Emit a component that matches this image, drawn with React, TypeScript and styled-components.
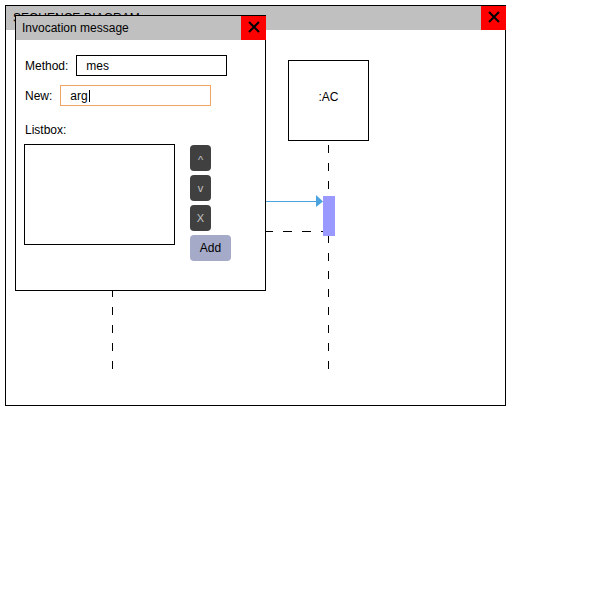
import React from "react";
import styled, { createGlobalStyle } from "styled-components";

const GlobalStyle = createGlobalStyle`
  html, body {
    margin: 0;
    padding: 0;
    background: #ffffff;
  }
  body {
    font-family: "Liberation Sans", Arial, sans-serif;
    font-size: 12px;
    color: #000;
  }
`;

const Desktop = styled.div`
  position: relative;
  width: 600px;
  height: 600px;
  overflow: hidden;
`;

const Window = styled.div<{ $left: number; $top: number; $w: number; $h: number }>`
  position: absolute;
  left: ${(p) => p.$left}px;
  top: ${(p) => p.$top}px;
  width: ${(p) => p.$w}px;
  height: ${(p) => p.$h}px;
  box-sizing: border-box;
  border: 1px solid #000;
  background: #ffffff;
  display: flex;
  flex-direction: column;
`;

const TitleBar = styled.div`
  flex: none;
  height: 24px;
  margin-right: -1px;
  display: flex;
  align-items: center;
  background: #c0c0c0;
`;

const TitleText = styled.div<{ $indent: number }>`
  flex: 1;
  padding-left: ${(p) => p.$indent}px;
  font-size: 12px;
  line-height: 14px;
  white-space: nowrap;
  overflow: hidden;
`;

const CloseButton = styled.div`
  flex: none;
  width: 25px;
  height: 24px;
  box-sizing: border-box;
  padding-bottom: 2px;
  background: #ff0000;
  display: flex;
  align-items: center;
  justify-content: center;
`;

const Canvas = styled.div`
  position: relative;
  flex: 1;
`;

const Drawing = styled.svg`
  position: absolute;
  left: 0;
  top: 0;
  width: 100%;
  height: 100%;
`;

const ObjectBox = styled.div<{ $x: number; $y: number }>`
  position: absolute;
  left: ${(p) => p.$x}px;
  top: ${(p) => p.$y}px;
  width: 81px;
  height: 81px;
  box-sizing: border-box;
  border: 1px solid #000;
  background: #fff;
  display: flex;
  align-items: center;
  justify-content: center;
  padding-bottom: 8px;
  font-size: 12px;
`;

const Activation = styled.div<{ $x: number; $y: number; $h: number }>`
  position: absolute;
  left: ${(p) => p.$x}px;
  top: ${(p) => p.$y}px;
  width: 12px;
  height: ${(p) => p.$h}px;
  background: #9999ff;
`;

const DialogBody = styled.div`
  flex: 1;
  padding: 15px 8px 0 8px;
  display: flex;
  flex-direction: column;
`;

const FieldRow = styled.div<{ $gapTop: number }>`
  display: flex;
  align-items: center;
  gap: 8px;
  margin-top: ${(p) => p.$gapTop}px;
  margin-left: 1px;
  height: 21px;
`;

const Label = styled.span`
  font-size: 12px;
  line-height: 14px;
  white-space: nowrap;
`;

const TextField = styled.div<{ $focused?: boolean }>`
  width: 151px;
  height: 21px;
  box-sizing: border-box;
  border: 1px solid ${(p) => (p.$focused ? "#f0a466" : "#000000")};
  background: #fff;
  padding-left: 9px;
  display: flex;
  align-items: center;
  font-size: 12px;
`;

const Caret = styled.span`
  display: inline-block;
  width: 1px;
  height: 12px;
  margin-left: 1px;
  background: #000;
`;

const SectionLabel = styled(Label)`
  display: block;
  margin-top: 17px;
  margin-left: 1px;
`;

const ListArea = styled.div`
  display: flex;
  align-items: flex-start;
  gap: 15px;
  margin-top: 7px;
`;

const ListBox = styled.div`
  width: 151px;
  height: 101px;
  box-sizing: border-box;
  border: 1px solid #000;
  background: #fff;
`;

const ButtonColumn = styled.div`
  display: flex;
  flex-direction: column;
  align-items: flex-start;
  gap: 4px;
  margin-top: 1px;
`;

const ToolButton = styled.div<{ $primary?: boolean; $shift?: number }>`
  width: ${(p) => (p.$primary ? 41 : 21)}px;
  height: 26px;
  box-sizing: border-box;
  border-radius: 4px;
  background: ${(p) => (p.$primary ? "#a6aac9" : "#404040")};
  color: ${(p) => (p.$primary ? "#000000" : "#c4c4c4")};
  font-size: ${(p) => (p.$primary ? 12 : 11)}px;
  line-height: 14px;
  padding-top: ${(p) => p.$shift ?? 0}px;
  display: flex;
  align-items: center;
  justify-content: center;
`;

const CloseGlyph = () => (
  <svg width="12" height="12" viewBox="0 0 12 12">
    <path d="M1 1 L11 11 M11 1 L1 11" stroke="#000" strokeWidth="2" fill="none" />
  </svg>
);

export default function App() {
  return (
    <>
      <GlobalStyle />
      <Desktop>
        <Window $left={5} $top={5} $w={501} $h={401}>
          <TitleBar>
            <TitleText $indent={7}>SEQUENCE DIAGRAM</TitleText>
            <CloseButton>
              <CloseGlyph />
            </CloseButton>
          </TitleBar>
          <Canvas>
            <Drawing>
              <line x1="106.5" y1="115" x2="106.5" y2="340" stroke="#000" strokeDasharray="8 10" />
              <line x1="322.5" y1="115" x2="322.5" y2="340" stroke="#000" strokeDasharray="8 10" />
              <line x1="106" y1="171.5" x2="311" y2="171.5" stroke="#4aa3df" />
              <polygon points="310,165 310,177 317,171.5" fill="#4aa3df" />
              <line x1="106" y1="201.5" x2="317" y2="201.5" stroke="#000" strokeDasharray="9 10" />
            </Drawing>
            <ObjectBox $x={282} $y={30}>:AC</ObjectBox>
            <Activation $x={317} $y={166} $h={40} />
          </Canvas>
        </Window>

        <Window $left={15} $top={15} $w={251} $h={276}>
          <TitleBar>
            <TitleText $indent={6}>Invocation message</TitleText>
            <CloseButton>
              <CloseGlyph />
            </CloseButton>
          </TitleBar>
          <DialogBody>
            <FieldRow $gapTop={0}>
              <Label>Method:</Label>
              <TextField>mes</TextField>
            </FieldRow>
            <FieldRow $gapTop={9}>
              <Label>New:</Label>
              <TextField $focused>
                arg
                <Caret />
              </TextField>
            </FieldRow>
            <SectionLabel>Listbox:</SectionLabel>
            <ListArea>
              <ListBox />
              <ButtonColumn>
                <ToolButton $shift={4}>^</ToolButton>
                <ToolButton>v</ToolButton>
                <ToolButton>X</ToolButton>
                <ToolButton $primary>Add</ToolButton>
              </ButtonColumn>
            </ListArea>
          </DialogBody>
        </Window>
      </Desktop>
    </>
  );
}
